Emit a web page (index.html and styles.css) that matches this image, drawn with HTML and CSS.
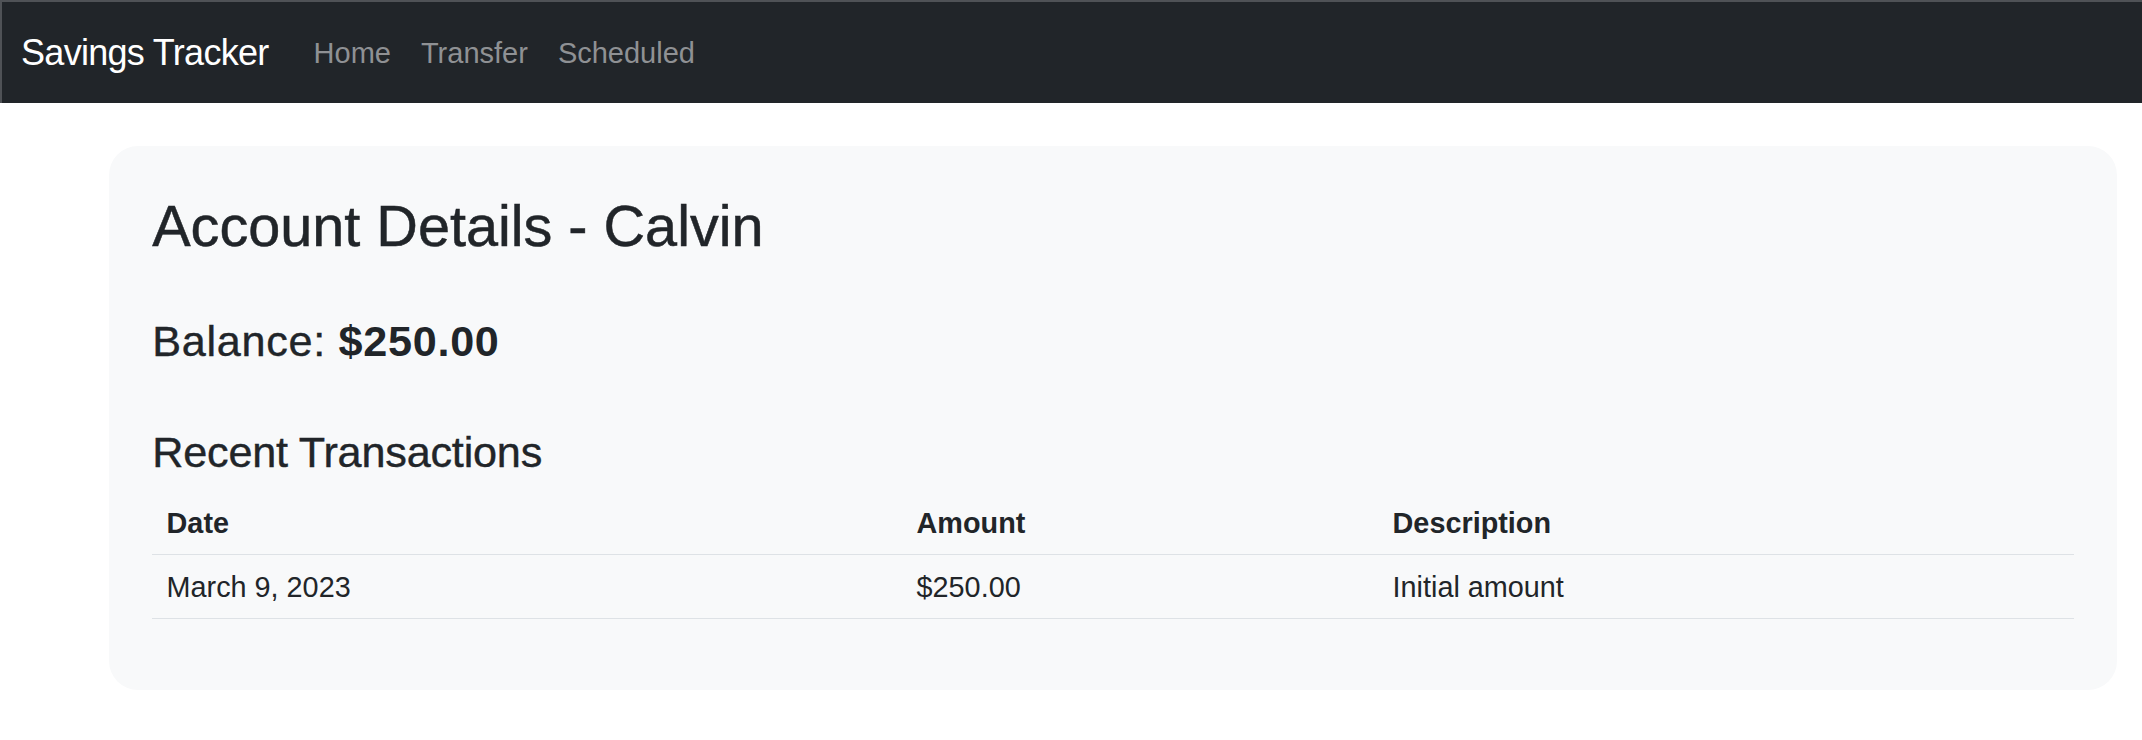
FILE: index.html
```html
<!DOCTYPE html>
<html lang="en">
<head>
<meta charset="utf-8">
<title>Savings Tracker</title>
<link rel="stylesheet" href="styles.css">
</head>
<body>
<nav class="navbar">
  <a class="brand" href="#">Savings Tracker</a>
  <ul class="nav">
    <li><a class="nav-link" href="#">Home</a></li>
    <li><a class="nav-link" href="#">Transfer</a></li>
    <li><a class="nav-link" href="#">Scheduled</a></li>
  </ul>
</nav>
<main class="main">
  <section class="card">
    <h2 class="title">Account Details - Calvin</h2>
    <h4 class="balance">Balance: <strong>$250.00</strong></h4>
    <h4 class="subtitle">Recent Transactions</h4>
    <table class="table">
      <thead>
        <tr>
          <th class="col-date">Date</th>
          <th class="col-amount">Amount</th>
          <th class="col-desc">Description</th>
        </tr>
      </thead>
      <tbody>
        <tr>
          <td>March 9, 2023</td>
          <td>$250.00</td>
          <td>Initial amount</td>
        </tr>
      </tbody>
    </table>
  </section>
</main>
</body>
</html>
```
FILE: styles.css
```css
* { box-sizing: border-box; }

body {
  margin: 0;
  background: #ffffff;
  color: #212529;
  font-family: "Liberation Sans", Arial, sans-serif;
}

.navbar {
  display: flex;
  align-items: center;
  height: 103px;
  background: #212529;
  border-top: 2px solid #4f5256;
  border-left: 2px solid #4f5256;
  padding-left: 19px;
}

.brand {
  font-size: 36px;
  line-height: 54px;
  letter-spacing: -0.7px;
  color: #ffffff;
  text-decoration: none;
  margin-right: 30px;
}

.nav {
  display: flex;
  list-style: none;
  margin: 0;
  padding: 0;
  padding-top: 2px;
}

.nav-link {
  display: block;
  padding: 0 15px;
  font-size: 29px;
  line-height: 43.5px;
  color: #8f9194;
  text-decoration: none;
}

.main {
  padding-top: 43px;
}

.card {
  margin-left: 109px;
  width: 2008px;
  background: #f8f9fa;
  border-radius: 29px;
  padding: 45.5px 43.2px 71px 43.2px;
}

.title {
  margin: 0;
  font-size: 57.6px;
  line-height: 69.1px;
  font-weight: 400;
  -webkit-text-stroke: 0.5px #212529;
}

.balance {
  margin: 55.4px 0 0 0;
  font-size: 43.2px;
  line-height: 51.8px;
  font-weight: 400;
  letter-spacing: 0.7px;
  -webkit-text-stroke: 0.4px #212529;
}

.balance strong {
  font-weight: 700;
  -webkit-text-stroke: 0;
}

.subtitle {
  margin: 59.2px 0 0 0;
  font-size: 43.2px;
  line-height: 51.8px;
  font-weight: 400;
  letter-spacing: -0.2px;
  -webkit-text-stroke: 0.4px #212529;
}

.table {
  width: 100%;
  margin-top: 12.2px;
  border-collapse: separate;
  border-spacing: 0;
  table-layout: fixed;
  font-size: 28.8px;
}

.table th,
.table td {
  text-align: left;
  padding: 11.5px 14.4px 8.5px 14.4px;
  line-height: 43px;
  border-bottom: 1px solid #dee2e6;
}

.table th {
  font-weight: 700;
}

.col-date { width: 750px; }
.col-amount { width: 476px; }
```
